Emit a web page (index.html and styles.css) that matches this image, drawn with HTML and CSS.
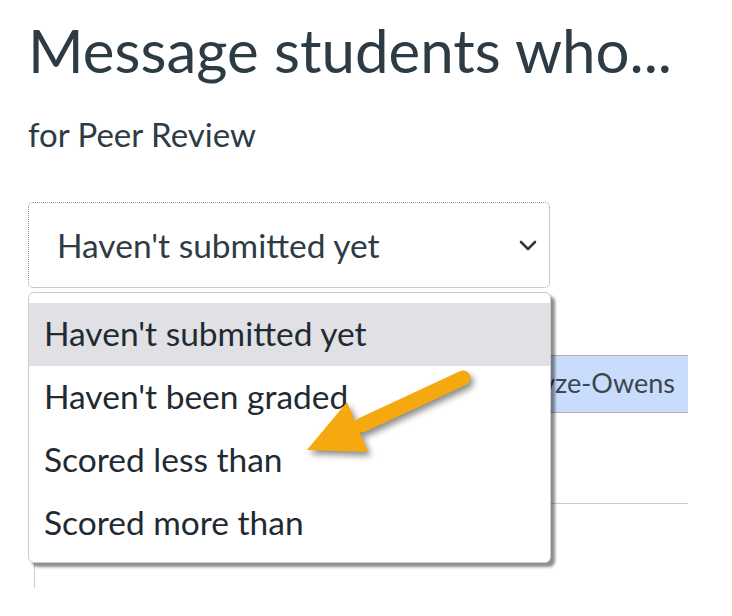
FILE: index.html
```html
<!DOCTYPE html>
<html lang="en">
<head>
  <meta charset="UTF-8">
  <title>Message students who...</title>
  <link rel="stylesheet" href="styles.css">
</head>
<body>
  <div class="page">
    <h1>Message students who...</h1>
    <p class="subtitle">for Peer Review</p>

    <div class="select">
      <span>Haven't submitted yet</span>
      <svg class="chevron" width="18" height="12" viewBox="0 0 18 12">
        <path d="M2 2 L9 9 L16 2" fill="none" stroke="#2d3b45" stroke-width="2.6" stroke-linecap="round" stroke-linejoin="round"/>
      </svg>
    </div>

    <div class="stage">
      <div class="behind">
        <div class="pill">Jordan Kinyze-Owens</div>
        <div class="rule"></div>
      </div>

      <ul class="menu">
        <li class="active">Haven't submitted yet</li>
        <li>Haven't been graded</li>
        <li>Scored less than</li>
        <li>Scored more than</li>
      </ul>

      <svg class="arrow" width="180" height="100" viewBox="0 0 180 100">
        <line x1="163" y1="13" x2="62" y2="60" stroke="#f6a90e" stroke-width="15" stroke-linecap="round"/>
        <polygon points="7,85 47,37 68,87" fill="#f6a90e"/>
      </svg>
    </div>
  </div>
</body>
</html>
```

FILE: styles.css
```css
body {
  margin: 0;
  font-family: 'Lato', 'Liberation Sans', sans-serif;
  color: #2d3b45;
  background: #fff;
}
.page {
  padding-left: 28px;
}
h1 {
  margin: 14px 0 0;
  font-size: 60px;
  font-weight: 400;
  line-height: 72px;
}
.subtitle {
  margin: 28px 0 0;
  font-size: 33px;
  line-height: 40px;
}
.select {
  margin-top: 48px;
  width: 522px;
  height: 86px;
  border: 1px dotted #8d979e;
  border-radius: 5px;
  display: flex;
  align-items: center;
  justify-content: space-between;
  padding: 0 12px 0 28px;
  box-sizing: border-box;
  font-size: 33.5px;
}
.chevron {
  margin-top: 2px;
}
.stage {
  position: relative;
  margin-top: 4px;
}
.behind {
  margin-left: 6px;
  width: 654px;
  height: 296px;
  border-left: 1px solid #c7cdd1;
  padding-top: 63px;
  box-sizing: border-box;
}
.pill {
  height: 58px;
  background: #c9dcfb;
  border-top: 1px solid #a8b3ba;
  border-bottom: 1px solid #a8b3ba;
  display: flex;
  align-items: center;
  justify-content: flex-end;
  padding: 0 13px 4px 0;
  font-size: 27px;
  color: #3b4650;
  box-sizing: border-box;
}
.rule {
  margin-top: 90px;
  border-top: 1px solid #c7cdd1;
}
.menu {
  position: absolute;
  top: 0;
  left: 0;
  width: 523px;
  height: 271px;
  margin: 0;
  padding: 10px 0 0;
  list-style: none;
  background: #fff;
  border: 1px solid #c7cdd1;
  border-radius: 6px;
  box-shadow: 4px 4px 3px rgba(0, 0, 0, 0.45);
  box-sizing: border-box;
}
.menu li {
  height: 63px;
  display: flex;
  align-items: center;
  padding: 0 0 4px 15px;
  box-sizing: border-box;
  font-size: 33.5px;
  color: #1f2a33;
}
.menu li.active {
  background: #e0e0e5;
}
.arrow {
  position: absolute;
  left: 272px;
  top: 73px;
  overflow: visible;
  filter: drop-shadow(3px 4px 3px rgba(0, 0, 0, 0.45));
}
```
